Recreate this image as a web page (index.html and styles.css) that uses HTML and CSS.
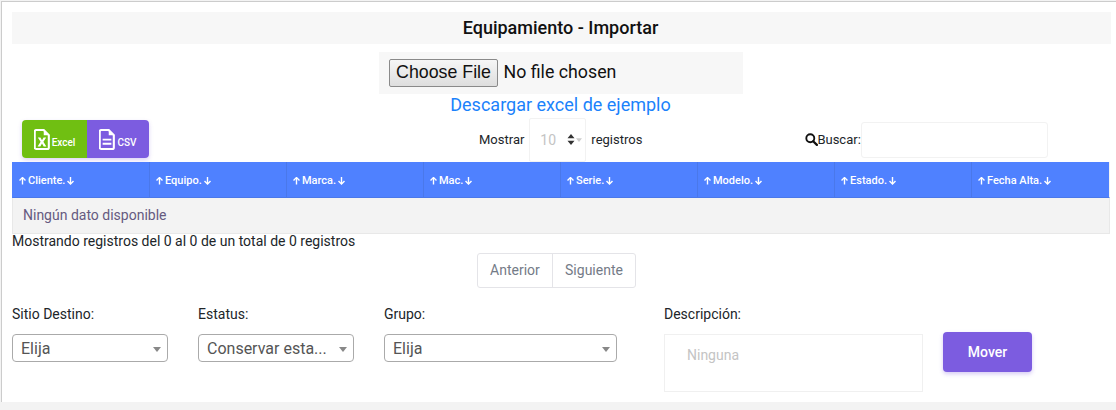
FILE: index.html
```html
<!DOCTYPE html>
<html lang="en">
<head>
    <meta charset="UTF-8">
    <meta name="viewport" content="width=device-width, initial-scale=1.0">
    <title>Equipamiento - Importar</title>
    <link rel="stylesheet" href="styles.css">
</head>
<body>
    <div class="card">
        <h2 class="title">Equipamiento - Importar</h2>
        <div class="upload">
            <div class="file-box"><input type="file" class="file-input"></div>
            <a class="sample-link" href="#">Descargar excel de ejemplo</a>
        </div>

        <div class="toolbar">
            <div class="export-group">
                <button class="export-btn excel">
                    <svg class="export-icon" viewBox="0 0 18 24"><path d="M2.500 1.200h8.500l5.800 5.800V21a1.800 1.800 0 0 1-1.800 1.800h-12.500a1.800 1.800 0 0 1-1.800-1.800V3a1.800 1.800 0 0 1 1.800-1.800z" fill="none" stroke="#fff" stroke-width="2.400"/><path d="M11 1.500v5.500h5.500z" fill="#fff"/><path d="M4.200 9.800h3l1.800 3 1.800-3h3l-3.200 4.900 3.400 5.300h-3.100l-1.900-3.400-1.900 3.400h-3.100l3.400-5.300z" fill="#fff"/></svg>
                    <span>Excel</span>
                </button>
                <button class="export-btn csv">
                    <svg class="export-icon" viewBox="0 0 18 24"><path d="M2.500 1.200h8.500l5.800 5.800V21a1.800 1.800 0 0 1-1.800 1.800h-12.500a1.800 1.800 0 0 1-1.800-1.800V3a1.800 1.800 0 0 1 1.800-1.800z" fill="none" stroke="#fff" stroke-width="2.400"/><path d="M11 1.500v5.500h5.500z" fill="#fff"/><path d="M4 11h10v2.200h-10zM4 15.700h10v2.200h-10z" fill="#fff"/></svg>
                    <span>CSV</span>
                </button>
            </div>
            <div class="page-size">
                <span>Mostrar</span>
                <div class="size-select">
                    <span class="size-value">10</span>
                    <svg class="size-sort" viewBox="0 0 8 11"><path d="M4 0l3.500 4.200h-7zM4 11l-3.500-4.200h7z" fill="#333"/></svg>
                    <svg class="size-caret" viewBox="0 0 8 5"><path d="M0 0h8l-4 5z" fill="#ccc"/></svg>
                </div>
                <span>registros</span>
            </div>
            <div class="search">
                <svg class="search-icon" viewBox="0 0 14 14"><circle cx="5.700" cy="5.700" r="4.300" fill="none" stroke="#111" stroke-width="2"/><path d="M8.800 8.800l4 4" stroke="#111" stroke-width="2.400" stroke-linecap="round"/></svg>
                <label for="buscar">Buscar:</label>
                <input type="text" id="buscar" class="search-input">
            </div>
        </div>

        <table class="data-table">
            <thead>
                <tr>
                    <th><i class="up"></i>Cliente.<i class="down"></i></th>
                    <th><i class="up"></i>Equipo.<i class="down"></i></th>
                    <th><i class="up"></i>Marca.<i class="down"></i></th>
                    <th><i class="up"></i>Mac.<i class="down"></i></th>
                    <th><i class="up"></i>Serie.<i class="down"></i></th>
                    <th><i class="up"></i>Modelo.<i class="down"></i></th>
                    <th><i class="up"></i>Estado.<i class="down"></i></th>
                    <th><i class="up"></i>Fecha Alta.<i class="down"></i></th>
                </tr>
            </thead>
            <tbody>
                <tr><td colspan="8">Ningún dato disponible</td></tr>
            </tbody>
        </table>
        <p class="table-info">Mostrando registros del 0 al 0 de un total de 0 registros</p>

        <div class="pager">
            <a class="pager-link" href="#">Anterior</a>
            <a class="pager-link" href="#">Siguiente</a>
        </div>

        <form class="move-form">
            <div class="field sitio">
                <label>Sitio Destino:</label>
                <div class="dropdown"><span class="dropdown-text">Elija</span><b class="dropdown-caret"></b></div>
            </div>
            <div class="field estatus">
                <label>Estatus:</label>
                <div class="dropdown"><span class="dropdown-text">Conservar esta...</span><b class="dropdown-caret"></b></div>
            </div>
            <div class="field grupo">
                <label>Grupo:</label>
                <div class="dropdown"><span class="dropdown-text">Elija</span><b class="dropdown-caret"></b></div>
            </div>
            <div class="field descripcion">
                <label for="desc">Descripción:</label>
                <textarea id="desc" class="desc-input" placeholder="Ninguna"></textarea>
            </div>
            <button type="button" class="move-btn">Mover</button>
        </form>
    </div>
</body>
</html>
```
FILE: styles.css
```css
* {
    box-sizing: border-box;
}

body {
    margin: 0;
    height: 410px;
    overflow: hidden;
    background-color: #f3f3f3;
    font-family: Roboto, "Liberation Sans", sans-serif;
    font-size: 14px;
    color: #212529;
}

.card {
    height: 401px;
    margin: 1px 0 0 1px;
    padding: 10px 5px 0 10px;
    background-color: #fff;
    border-top: 1px solid #ccc;
    border-left: 1px solid #ccc;
}

.title {
    margin: 0;
    height: 32px;
    padding-right: 2px;
    line-height: 32px;
    background-color: #f7f7f7;
    text-align: center;
    font-size: 18px;
    font-weight: 500;
    color: #111;
}

.upload {
    display: flex;
    flex-direction: column;
    align-items: center;
    margin-top: 8px;
    padding-right: 2px;
}

.file-box {
    width: 364px;
    height: 42px;
    padding: 7px 10px;
    background-color: #f7f7f7;
}

.file-input {
    display: block;
    width: 340px;
    font-family: Roboto, "Liberation Sans", sans-serif;
    font-size: 17.8px;
    color: #111;
}

.file-input::file-selector-button {
    width: 109px;
    height: 28px;
    padding: 0 0 1px 1px;
    margin-right: 6px;
    border: 1px solid #8a8a8a;
    border-radius: 2px;
    background: linear-gradient(#f6f6f6, #dedede);
    color: #111;
}

.sample-link {
    height: 23px;
    line-height: 22px;
    font-size: 18px;
    color: #1b82fb;
    text-decoration: none;
}

.toolbar {
    display: flex;
    align-items: center;
    height: 45px;
    color: #212529;
    font-size: 13px;
}

.export-group {
    display: flex;
    width: 127px;
    height: 38px;
    margin: -1px 0 0 10px;
    border-radius: 4px;
    box-shadow: 0 2px 4px rgba(115, 80, 220, 0.25);
    overflow: hidden;
}

.export-btn {
    display: flex;
    align-items: center;
    justify-content: center;
    gap: 2px;
    width: 65px;
    padding: 0;
    border: none;
    color: #fff;
    font-family: Roboto, "Liberation Sans", sans-serif;
    font-size: 10px;
    font-weight: 500;
}

.export-btn span {
    margin-top: 6px;
}

.export-btn.excel {
    background-color: #70bf12;
}

.export-btn.csv {
    width: 62px;
    background-color: #7c5ce0;
}

.export-icon {
    width: 16px;
    height: 21px;
}

.page-size {
    display: flex;
    align-items: center;
    gap: 5px;
    margin-left: 330px;
}

.size-select {
    display: flex;
    align-items: center;
    width: 57px;
    height: 44px;
    padding-left: 10px;
    border: 1px solid #f2f2f2;
    border-radius: 2px;
}

.size-value {
    width: 27px;
    color: #c4c4c4;
    font-size: 14px;
}

.size-sort {
    width: 8px;
    height: 11px;
}

.size-caret {
    width: 6px;
    height: 4px;
    margin-left: 1px;
}

.search {
    display: flex;
    align-items: center;
    margin-left: 163px;
}

.search-icon {
    width: 13px;
    height: 13px;
    margin-right: -1px;
}

.search-input {
    width: 187px;
    height: 36px;
    border: 1px solid #f2f2f2;
    border-radius: 3px;
    outline: none;
}

.data-table {
    width: 1098px;
    border-collapse: separate;
    border-spacing: 0;
    table-layout: fixed;
}

.data-table th {
    width: 137px;
    height: 36px;
    padding: 1px 0 0 6px;
    background-color: #4f81ff;
    border-left: 1px solid #4a78ea;
    border-bottom: 1px solid #4a78ea;
    color: #fff;
    font-size: 11px;
    font-weight: 500;
    text-align: left;
    white-space: nowrap;
}

.data-table th:first-child {
    border-left-color: #4f81ff;
}

.data-table th:last-child {
    width: 139px;
    border-right: 1px solid #f3f3f3;
}

.data-table td {
    height: 36px;
    padding: 0 0 1px 10px;
    background-color: #f3f3f3;
    border: 1px solid #e8e8e8;
    border-top: none;
    color: #655a80;
    font-size: 14px;
}

.up,
.down {
    display: inline-block;
    width: 7px;
    height: 8px;
    vertical-align: -1px;
    background-color: #fff;
    clip-path: polygon(50% 0, 100% 45%, 85% 55%, 60% 32%, 60% 100%, 40% 100%, 40% 32%, 15% 55%, 0 45%);
}

.up {
    margin-right: 2px;
}

.down {
    margin-left: 2px;
    transform: rotate(180deg);
}

.table-info {
    margin: 0;
    height: 19px;
    line-height: 15px;
    font-size: 14px;
}

.pager {
    display: flex;
    width: 159px;
    height: 35px;
    margin: 0 0 0 465px;
    border: 1px solid #e4e4e8;
    border-radius: 3px;
}

.pager-link {
    flex: 1 1 auto;
    line-height: 33px;
    text-align: center;
    color: #747b87;
    font-size: 14px;
    text-decoration: none;
}

.pager-link + .pager-link {
    border-left: 1px solid #e4e4e8;
}

.move-form {
    display: flex;
    align-items: flex-start;
    margin-top: 18px;
}

.field label {
    display: block;
    height: 28px;
    font-size: 14px;
    line-height: 17px;
}

.sitio {
    width: 156px;
    margin-right: 30px;
}

.estatus {
    width: 156px;
    margin-right: 30px;
}

.grupo {
    width: 233px;
    margin-right: 47px;
}

.descripcion {
    width: 259px;
    margin-right: 20px;
}

.dropdown {
    position: relative;
    height: 28px;
    padding: 0 20px 0 8px;
    border: 1px solid #aaa;
    border-radius: 4px;
    line-height: 27px;
    color: #555;
    font-size: 16px;
}

.dropdown-text {
    display: block;
    white-space: nowrap;
}

.dropdown-caret {
    position: absolute;
    top: 12px;
    right: 6px;
    border-width: 5px 4px 0;
    border-style: solid;
    border-color: #888 transparent transparent;
}

.desc-input {
    display: block;
    width: 259px;
    height: 58px;
    padding: 12px 22px;
    border: 1px solid #f0f0f0;
    resize: none;
    outline: none;
    font-family: Roboto, "Liberation Sans", sans-serif;
    font-size: 14px;
}

.desc-input::placeholder {
    color: #c4c4c4;
}

.move-btn {
    width: 89px;
    height: 40px;
    margin-top: 26px;
    border: none;
    border-radius: 4px;
    background-color: #7c5ce0;
    box-shadow: 0 2px 4px rgba(115, 80, 220, 0.3);
    color: #fff;
    font-family: Roboto, "Liberation Sans", sans-serif;
    font-size: 14px;
    font-weight: 500;
}
```
